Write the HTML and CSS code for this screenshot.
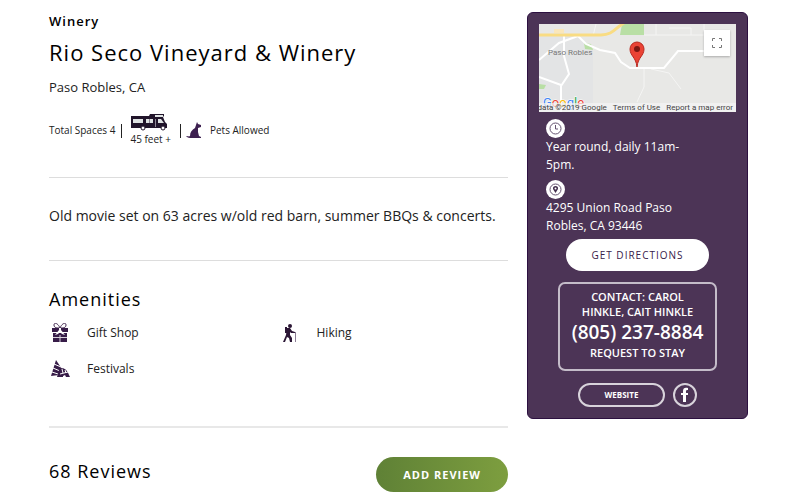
FILE: index.html
```html
<!DOCTYPE html>
<html lang="en">

<head>
	<meta charset="utf-8">
	<title>Rio Seco Vineyard &amp; Winery</title>
	<link rel="stylesheet" href="styles.css">
</head>

<body>
	<div class="page">
		<main>
			<header>
				<p class="category">Winery</p>
				<h1>Rio Seco Vineyard &amp; Winery</h1>
				<p class="location">Paso Robles, CA</p>
				<ul class="features">
					<li>Total Spaces 4</li>
					<li class="rv">
						<svg width="38" height="18" viewBox="0 0 38 18">
							<path fill="#21152b" d="M1 3h18l1-2h14v2l-1 1 2 5 2 2v4H1z"/>
							<path fill="#dfe3e3" d="M3 6h10v4H3zM16 6h7v4h-7zM25 2h8v2h-8zM28 6h3l3 4h-6z"/>
							<path fill="#8d8795" d="M19 6h1v4h-1zM25 6h1v8h-1z"/>
							<g fill="#fff" stroke="#21152b"><circle cx="13" cy="15" r="2"/><circle cx="33" cy="15" r="2"/></g>
						</svg>
						<span>45 feet +</span>
					</li>
					<li class="pets">
						<svg width="16" height="16" viewBox="0 0 16 16">
							<path fill="#3d2050" d="M11 0l1 2 3 1v2l-3 1v4l1 4 2 1v1H6c-3 0-4 0-6-2 2 0 3 1 4 0 0-4 2-6 5-8z"/>
						</svg>
						<span>Pets Allowed</span>
					</li>
				</ul>
			</header>
			<p class="description">Old movie set on 63 acres w/old red barn, summer BBQs &amp; concerts.</p>
			<section class="amenities">
				<h2>Amenities</h2>
				<ul>
					<li>
						<svg width="22" height="20" viewBox="0 0 22 20">
							<path fill="none" stroke="#42284f" d="M11 5C9 0 5-1 5 2s3 3 6 3c3 0 6 0 6-3s-4-2-6 3z"/>
							<path fill="#371c48" d="M3 5h16v4H3zM4 10h14v9H4z"/>
							<path stroke="#d8d2dc" d="M4 14.500h14M11 12v7"/>
							<path fill="#fff" d="M10 5h2v2l4 5-3-1-2-2-2 2-3 1 4-5z"/>
						</svg>
						Gift Shop
					</li>
					<li>
						<svg width="22" height="20" viewBox="0 0 22 20">
							<circle cx="11" cy="3" r="2" fill="#2b1635"/>
							<path fill="#2b1635" d="M6 4h2v6H6zM8 5h3l2 3 3 1v1h-4l-1-1v3l2 3v4h-2l-1-4-2-1-2 5H4l3-7z"/>
							<path stroke="#8c7d94" d="M16.500 9v10"/>
						</svg>
						Hiking
					</li>
					<li>
						<svg width="22" height="20" viewBox="0 0 22 20">
							<path fill="#371c48" d="M7 1l6 9-3 6-8 1z"/>
							<path stroke="#fff" d="M5 5l7 3M4 9l7 3M3 13l6 2"/>
							<path fill="#371c48" d="M8 18l2-7c3-4 8-1 10 5l1 2h-4l-1-2-2 1v1z"/>
							<path stroke="#fff" fill="none" d="M11 15l8-2M13 10l1 4M16 11l1 3"/>
						</svg>
						Festivals
					</li>
				</ul>
			</section>
			<section class="reviews">
				<h2>68 Reviews</h2>
				<button type="button">ADD REVIEW</button>
			</section>
		</main>

		<aside>
			<div class="map">
				<svg class="streets" viewBox="0 0 197 88" preserveAspectRatio="xMidYMid slice">
					<path fill="#e8e8e6" d="M0 0h197v88H0z"/>
					<path fill="#e3e4e5" d="M0 12h38l16 14v62H0z"/>
					<path fill="#b9dfa5" d="M83 0h22v11H81zM45 19l7 1 2 6-8-1zM0 60l7 1-2 4H0z"/>
					<g fill="none" stroke="#f5f5f4">
						<path d="M105 11h60V0M54 12l3-12M117 0v11M130 4h22v7M105 43v20l-7 15M112 45l18 4 12 16"/>
						<path stroke="#fff" stroke-width="2" d="M25 12v20l5 18-8 12v26M0 36l20-17 19-7 8 8 14 6 15 3 6 9 9 6h34l14-17h37M0 53l22 8"/>
					</g>
					<path fill="none" stroke="#f9dc83" stroke-width="3" d="M0 11h62c12 0 14-7 23-12"/>
					<path fill="none" stroke="#fae7bb" stroke-width="4" d="M15 7h10"/>
					<path fill="#ea4335" stroke="#b8281f" d="M98 43c-1-10-7-11-7-18a7 7 0 0 1 14 0c0 7-6 8-7 18z"/>
					<circle cx="98" cy="25" r="3" fill="#7b1712"/>
				</svg>
				<span class="place">Paso Robles</span>
				<button type="button" class="fullscreen" aria-label="Toggle fullscreen">
					<svg width="12" height="12" viewBox="0 0 12 12">
						<path fill="none" stroke="#777" d="M1.500 4V1.500H4M8 1.500h2.500V4M10.500 8v2.500H8M4 10.500H1.500V8"/>
					</svg>
				</button>
				<span class="google"><i class="b">G</i><i class="r">o</i><i class="y">o</i><i class="b">g</i><i class="g">l</i><i class="r">e</i></span>
				<div class="credits">
					<span>Map data ©2019 Google</span>
					<a href="#">Terms of Use</a>
					<a href="#">Report a map error</a>
				</div>
			</div>
			<div class="details">
				<svg width="19" height="19" viewBox="0 0 19 19">
					<circle cx="9.500" cy="9.500" r="9.500" fill="#fff"/>
					<g fill="none" stroke="#655370"><circle cx="9.500" cy="9.500" r="5.500"/><path d="M9.500 6v4H12"/></g>
				</svg>
				<p>Year round, daily 11am-5pm.</p>
				<svg width="19" height="19" viewBox="0 0 19 19">
					<circle cx="9.500" cy="9.500" r="9.500" fill="#fff"/>
					<circle cx="9.500" cy="9.500" r="5.500" fill="none" stroke="#655370"/>
					<path fill="#44304f" d="M9.500 13L7 9c-1-4 6-4 5 0z"/>
					<circle cx="9.500" cy="8.500" r="1" fill="#fff"/>
				</svg>
				<p>4295 Union Road Paso Robles, CA 93446</p>
			</div>
			<a class="directions" href="#">GET DIRECTIONS</a>
			<div class="contact">
				<p>CONTACT: CAROL HINKLE, CAIT HINKLE</p>
				<a class="phone" href="tel:8052378884">(805) 237-8884</a>
				<a href="#">REQUEST TO STAY</a>
			</div>
			<div class="links">
				<a class="website" href="#">WEBSITE</a>
				<a class="facebook" href="#" aria-label="Facebook">
					<svg width="24" height="24" viewBox="0 0 24 24">
						<circle cx="12" cy="12" r="11" fill="none" stroke="#d8d3db" stroke-width="2"/>
						<path fill="#fff" d="M10 19v-7H8v-2h2V8c0-3 2-4 5-3v2c-2 0-2 0-2 3h2v2h-2v7z"/>
					</svg>
				</a>
			</div>
		</aside>
	</div>
</body>

</html>
```
FILE: styles.css
```css
* {
	box-sizing: border-box;
}
body {
	margin: 0;
	background: #fff;
	color: #222;
	font-family: "Open Sans", "Noto Sans", sans-serif;
	font-size: 12px;
	line-height: 18px;
}
h1, h2, p, ul {
	margin: 0;
	padding: 0;
	font-weight: normal;
}
ul {
	list-style: none;
}
a {
	color: inherit;
	text-decoration: none;
}
svg {
	display: block;
}
button {
	border: 0;
	font-family: inherit;
}
.page {
	display: flex;
	align-items: flex-start;
	gap: 19px;
	padding: 12px 52px 0 49px;
}
main {
	flex: 1;
}

header {
	padding-bottom: 30px;
	border-bottom: 1px solid #ddd;
}
.category {
	color: #000;
	font-size: 13px;
	font-weight: 600;
	letter-spacing: 1px;
}
h1 {
	margin: 6px 0 9px;
	color: #000;
	font-size: 22px;
	letter-spacing: 1px;
	line-height: 32px;
}
.location {
	font-size: 13px;
	line-height: 20px;
}
.features {
	display: flex;
	align-items: center;
	margin-top: 16px;
	font-size: 10px;
	line-height: 16px;
}
.features li + li {
	position: relative;
	margin-left: 6px;
	padding-left: 9px;
}
.features li + li::before {
	content: "";
	position: absolute;
	top: 50%;
	left: 0;
	width: 1px;
	height: 14px;
	margin-top: -6px;
	background: #222;
}
.features .pets {
	display: flex;
	align-items: center;
	gap: 8px;
	margin-left: 9px;
	padding-left: 6px;
}

.description {
	padding: 27px 0 34px;
	border-bottom: 1px solid #ddd;
	font-size: 14px;
	line-height: 21px;
}

h2 {
	color: #000;
	font-size: 18px;
	letter-spacing: 1px;
	line-height: 28px;
}
.amenities {
	padding: 24px 0 47px;
	border-bottom: 2px solid #e8e8e8;
}
.amenities ul {
	display: grid;
	grid-template-columns: 1fr 1fr;
	row-gap: 16px;
	margin-top: 10px;
}
.amenities li {
	display: flex;
	align-items: center;
	gap: 16px;
}

.reviews {
	display: flex;
	align-items: flex-start;
	justify-content: space-between;
	padding: 29px 0 6px;
}
.reviews button {
	padding: 0 27px;
	border-radius: 18px;
	background: linear-gradient(90deg, #5f8136, #7d9e3f);
	color: #fff;
	font-size: 11px;
	font-weight: bold;
	letter-spacing: 1px;
	line-height: 35px;
}

aside {
	width: 221px;
	padding: 11px;
	border: 1px solid #2c1040;
	border-radius: 6px;
	background: #4c3456;
	color: #fff;
}
.map {
	position: relative;
	height: 88px;
	overflow: hidden;
	font-family: Roboto, sans-serif;
}
.streets {
	width: 100%;
	height: 100%;
}
.place {
	position: absolute;
	top: 20px;
	left: 9px;
	color: #777;
	font-size: 8px;
}
.fullscreen {
	position: absolute;
	top: 6px;
	right: 6px;
	padding: 7px;
	background: #fff;
	box-shadow: 0 1px 2px #aaa;
}
.google {
	position: absolute;
	bottom: 0;
	left: 4px;
	font-size: 13px;
	-webkit-text-stroke: 1px #fff;
	paint-order: stroke fill;
}
.google i {
	font-style: normal;
}
.google .b { color: #4285f4; }
.google .r { color: #ea4335; }
.google .y { color: #fbbc05; }
.google .g { color: #34a853; }
.credits {
	position: absolute;
	right: 0;
	bottom: 0;
	display: flex;
	gap: 6px;
	padding-right: 3px;
	background: rgba(245, 245, 245, 0.7);
	color: #444;
	font-size: 8px;
	line-height: 9px;
	white-space: nowrap;
}

.details {
	padding: 7px 50px 4px 7px;
}
.details p + svg {
	margin-top: 6px;
}
.directions {
	display: block;
	width: fit-content;
	margin: 0 auto;
	padding: 0 25px;
	border-radius: 16px;
	background: #fff;
	color: #38214a;
	font-size: 10px;
	letter-spacing: 1px;
	line-height: 32px;
}
.contact {
	margin: 11px 19px 0;
	padding: 5px 8px 9px;
	border: 2px solid #c4bcc9;
	border-radius: 7px;
	font-size: 11px;
	font-weight: 600;
	line-height: 15px;
	text-align: center;
}
.contact p {
	padding: 0 8px;
	font-weight: 600;
}
.contact a {
	display: block;
}
.contact .phone {
	font-size: 19px;
	line-height: 26px;
}
.links {
	display: flex;
	align-items: center;
	justify-content: center;
	gap: 8px;
	margin-top: 12px;
}
.website {
	padding: 0 25px;
	border: 2px solid #d8d3db;
	border-radius: 12px;
	font-size: 8px;
	font-weight: bold;
	line-height: 20px;
}
```
